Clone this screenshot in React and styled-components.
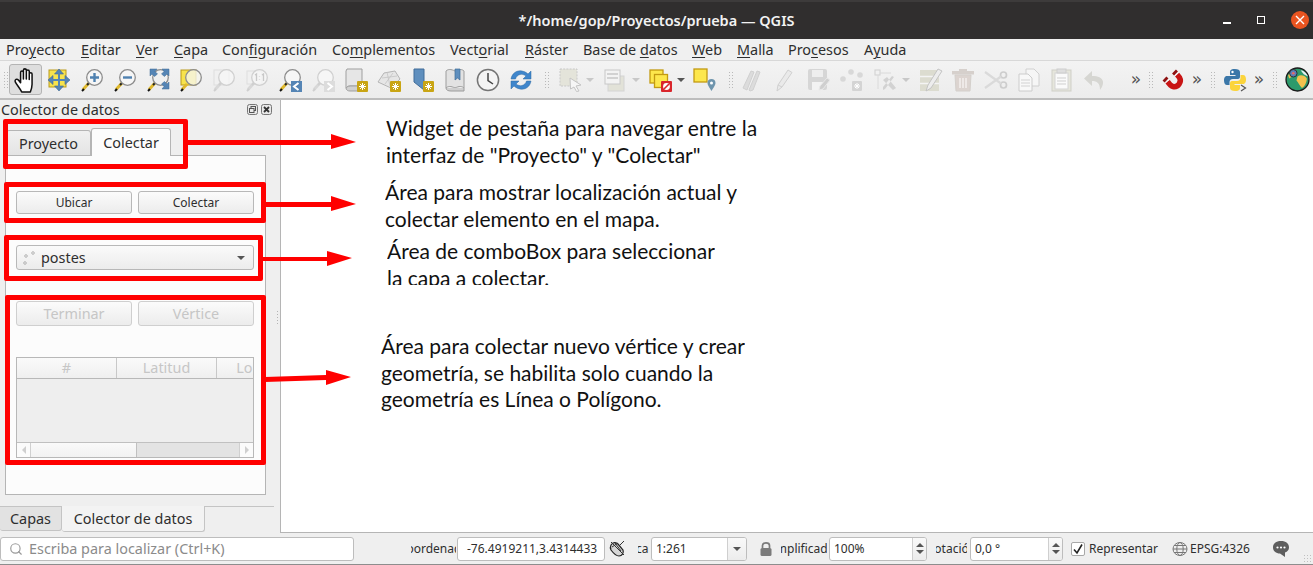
import React from "react";
import styled, { createGlobalStyle } from "styled-components";
import { Search } from "lucide-react";

const UI_FONT = `"Noto Sans", "Open Sans", sans-serif`;

const GlobalStyle = createGlobalStyle`
  html, body {
    margin: 0;
    padding: 0;
    background: #efefef;
  }
  * {
    box-sizing: border-box;
  }
`;

const Page = styled.div`
  position: relative;
  width: 1313px;
  height: 565px;
  overflow: hidden;
  display: flex;
  flex-direction: column;
  font-family: ${UI_FONT};
  font-size: 14.4px;
  color: #2e2e2e;
  background: #efefef;
`;

/* title bar */
const TitleBar = styled.div`
  height: 39px;
  flex: none;
  display: grid;
  grid-template-columns: 1fr auto 1fr;
  align-items: center;
  padding-bottom: 1px;
  background: #302e2e;
  border-top: 2px solid #3d3b3b;
`;
const Title = styled.div`
  grid-column: 2;
  color: #f2f2f2;
  font-size: 14.5px;
  font-weight: 600;
  white-space: nowrap;
`;
const WindowButtons = styled.div`
  grid-column: 3;
  display: flex;
  justify-content: flex-end;
  align-items: center;
  gap: 26px;
  padding-right: 4px;
`;
const MinButton = styled.div`
  width: 8px;
  height: 2px;
  margin-top: 5px;
  background: #fff;
`;
const MaxButton = styled.div`
  width: 8px;
  height: 8px;
  border: 1px solid #fff;
`;
const CloseButton = styled.div`
  width: 18px;
  height: 18px;
  border-radius: 50%;
  background: #e95420;
  display: flex;
  align-items: center;
  justify-content: center;
`;

/* menu */
const MenuBar = styled.div`
  height: 22px;
  flex: none;
  display: flex;
  align-items: center;
  gap: 14px;
  padding-left: 6px;
  background: #f0f0f0;
  border-bottom: 1px solid #d8d8d8;
`;
const MenuItem = styled.span`
  white-space: nowrap;
  color: #2e2e2e;
  width: ${(p) => p.$w}px;
  u {
    text-decoration-thickness: 1px;
    text-underline-offset: 2px;
  }
`;

/* toolbar */
const ToolBar = styled.div`
  height: 39px;
  flex: none;
  display: flex;
  align-items: center;
  padding-left: 3px;
  background: linear-gradient(#f3f3f3, #ececec);
  border-bottom: 2px solid #bdbdbd;
`;
const Handle = styled.div`
  flex: none;
  width: ${(p) => p.$w || 6}px;
  height: 17px;
  display: flex;
  justify-content: center;
  &::before {
    content: "";
    width: 6px;
    height: 100%;
    background-image: radial-gradient(#b9b9b9 0.8px, transparent 1px);
    background-size: 3px 3px;
  }
`;
const Tool = styled.div`
  flex: none;
  width: ${(p) => p.$w || 33}px;
  height: 31px;
  display: flex;
  align-items: center;
  justify-content: center;
  border-radius: 3px;
  border: 1px solid ${(p) => (p.$active ? "#b4b4b4" : "transparent")};
  background: ${(p) => (p.$active ? "#dedede" : "transparent")};
`;
const Drop = styled.div`
  flex: none;
  width: 0;
  height: 0;
  margin: 0 ${(p) => p.$m || 0}px 0 0;
  border-left: 4px solid transparent;
  border-right: 4px solid transparent;
  border-top: 4px solid ${(p) => (p.$on ? "#555" : "#c8c8c8")};
`;
const More = styled.div`
  flex: none;
  width: ${(p) => p.$w || 20}px;
  margin-left: ${(p) => p.$ml || 0}px;
  text-align: center;
  font-size: 17px;
  line-height: 1;
  color: #555;
  font-family: "DejaVu Sans", sans-serif;
`;

/* main area */
const Main = styled.div`
  flex: 1;
  min-height: 0;
  display: flex;
`;
const Dock = styled.div`
  position: relative;
  width: 280px;
  flex: none;
  display: flex;
  flex-direction: column;
`;
const Canvas = styled.div`
  flex: 1;
  position: relative;
  background: #fff;
  border-left: 1px solid #b5b5b5;
  border-bottom: 1px solid #b5b5b5;
`;
const DockHead = styled.div`
  height: 19px;
  flex: none;
  display: flex;
  align-items: center;
  justify-content: space-between;
  padding: 0 8px 0 1px;
`;
const DockIcons = styled.div`
  display: flex;
  gap: 3px;
`;
const Splitter = styled.div`
  position: absolute;
  right: 1px;
  top: 210px;
  width: 3px;
  height: 16px;
  background-image: radial-gradient(#b4b4b4 0.8px, transparent 1px);
  background-size: 3px 3px;
`;
const TabRow = styled.div`
  display: flex;
  align-items: flex-end;
  height: 36px;
  flex: none;
  padding-left: 6px;
`;
const Tab = styled.div`
  display: flex;
  align-items: center;
  justify-content: center;
  width: ${(p) => p.$w}px;
  height: ${(p) => (p.$active ? 28 : 26)}px;
  margin-bottom: -1px;
  position: relative;
  background: ${(p) => (p.$active ? "#fcfcfc" : "linear-gradient(#f0f0f0, #e4e4e4)")};
  border: 1px solid #b5b5b5;
  border-bottom: ${(p) => (p.$active ? "none" : "1px solid #b5b5b5")};
  border-left: ${(p) => (p.$active ? "1px solid #b5b5b5" : "1px solid #d0d0d0")};
  border-radius: 3px 3px 0 0;
`;
const Pane = styled.div`
  width: 261px;
  height: 340px;
  flex: none;
  margin-left: 5px;
  padding: 35px 10px 0;
  background: #fcfcfc;
  border: 1px solid #b5b5b5;
`;
const ButtonRow = styled.div`
  display: flex;
  gap: 6px;
  margin-bottom: ${(p) => p.$mb || 0}px;
`;
const PushButton = styled.div`
  width: 116px;
  height: ${(p) => p.$h || 23}px;
  display: flex;
  align-items: center;
  justify-content: center;
  border-radius: 3px;
  font-size: ${(p) => (p.$off ? 14.4 : 12)}px;
  color: ${(p) => (p.$off ? "#c6c6c6" : "#2e2e2e")};
  border: 1px solid ${(p) => (p.$off ? "#cfcfcf" : "#b8b8b8")};
  background: linear-gradient(#fbfbfb, #ececec);
`;
const Combo = styled.div`
  width: 238px;
  height: 25px;
  margin-bottom: 31px;
  display: flex;
  align-items: center;
  padding: 0 8px 0 4px;
  border-radius: 3px;
  border: 1px solid #b8b8b8;
  background: linear-gradient(#fafafa, #ececec);
`;
const ComboText = styled.span`
  flex: 1;
`;
const Table = styled.div`
  width: 238px;
  height: 101px;
  margin-top: 31px;
  display: flex;
  flex-direction: column;
  border: 1px solid #b8b8b8;
  overflow: hidden;
`;
const TableHead = styled.div`
  height: 21px;
  flex: none;
  display: flex;
  background: linear-gradient(#fafafa, #efefef);
  border-bottom: 1px solid #b8b8b8;
`;
const HeadCell = styled.div`
  flex: none;
  width: 100px;
  text-align: center;
  color: #c6c6c6;
  line-height: 20px;
  white-space: nowrap;
  border-right: 1px solid #c8c8c8;
`;
const TableBody = styled.div`
  flex: 1;
  background: #eeeeee;
`;
const ScrollBar = styled.div`
  height: 15px;
  flex: none;
  display: flex;
  background: #fbfbfb;
  border-top: 1px solid #c0c0c0;
`;
const ScrollEnd = styled.div`
  width: 14px;
  flex: none;
  display: flex;
  align-items: center;
  justify-content: center;
  border-left: ${(p) => (p.$end ? "1px solid #d0d0d0" : "none")};
  border-right: ${(p) => (p.$end ? "none" : "1px solid #d0d0d0")};
`;
const ScrollThumb = styled.div`
  width: 105px;
  flex: none;
  background: linear-gradient(#fafafa, #f2f2f2);
`;
const ScrollTrack = styled.div`
  flex: 1;
  background: #e3e3e3;
  border-left: 1px solid #c0c0c0;
`;
const Triangle = styled.div`
  width: 0;
  height: 0;
  border-top: 4px solid transparent;
  border-bottom: 4px solid transparent;
  border-${(p) => (p.$end ? "left" : "right")}: 4px solid #cfcfcf;
`;
const BottomTabs = styled.div`
  margin-top: 11px;
  height: 28px;
  flex: none;
  display: flex;
  align-items: flex-start;
  margin-right: 6px;
  border-top: 1px solid #c4c4c4;
`;
const BottomTab = styled.div`
  width: ${(p) => p.$w}px;
  height: ${(p) => (p.$active ? 26 : 25)}px;
  margin-top: -1px;
  display: flex;
  align-items: center;
  justify-content: center;
  background: ${(p) => (p.$active ? "#f3f3f3" : "#e2e2e2")};
  border: 1px solid #c4c4c4;
  border-top: ${(p) => (p.$active ? "none" : "1px solid #c4c4c4")};
  border-left: none;
  border-radius: 0 0 3px 3px;
`;

/* status bar */
const StatusBar = styled.div`
  height: 32px;
  flex: none;
  display: flex;
  align-items: center;
  background: #efefef;
  border-bottom: 1px solid #8d8d8d;
  font-size: 12px;
`;
const LocatorBox = styled.div`
  width: 354px;
  height: 24px;
  flex: none;
  display: flex;
  align-items: center;
  gap: 6px;
  padding-left: 8px;
  margin-right: 57px;
  font-size: 14.4px;
  color: #8b8b8b;
  background: #fff;
  border: 1px solid #bdbdbd;
  border-radius: 3px;
`;
const ClipLabel = styled.div`
  flex: none;
  width: ${(p) => p.$w}px;
  margin: 0 ${(p) => p.$mr || 0}px 0 ${(p) => p.$ml || 0}px;
  display: flex;
  justify-content: center;
  overflow: hidden;
  white-space: nowrap;
`;
const ClipText = styled.span`
  flex: none;
  margin-right: ${(p) => p.$shift || 0}px;
`;
const Field = styled.div`
  flex: none;
  width: ${(p) => p.$w}px;
  height: 24px;
  display: flex;
  align-items: center;
  background: #fff;
  border: 1px solid #bdbdbd;
  border-radius: 3px;
  overflow: hidden;
  padding-left: ${(p) => p.$pl || 4}px;
`;
const FieldText = styled.span`
  flex: 1;
  white-space: nowrap;
`;
const DropSide = styled.div`
  width: 19px;
  height: 100%;
  flex: none;
  display: flex;
  align-items: center;
  justify-content: center;
  border-left: 1px solid #cfcfcf;
  background: linear-gradient(#f9f9f9, #ececec);
`;
const SpinSide = styled.div`
  width: 14px;
  height: 100%;
  flex: none;
  display: flex;
  flex-direction: column;
  align-items: center;
  justify-content: center;
  gap: 3px;
  border-left: 1px solid #cfcfcf;
  background: linear-gradient(#f9f9f9, #ececec);
`;
const ArrowUp = styled.div`
  width: 0;
  height: 0;
  border-left: 4px solid transparent;
  border-right: 4px solid transparent;
  border-bottom: 4px solid #555;
`;
const ArrowDown = styled.div`
  width: 0;
  height: 0;
  border-left: 4px solid transparent;
  border-right: 4px solid transparent;
  border-top: 4px solid #555;
`;
const StatusIcon = styled.div`
  flex: none;
  width: ${(p) => p.$w}px;
  margin: 0 ${(p) => p.$mr || 0}px 0 ${(p) => p.$ml || 0}px;
  display: flex;
  justify-content: center;
`;
const Check = styled.div`
  width: 14px;
  height: 14px;
  flex: none;
  margin: 0 4px 0 8px;
  display: flex;
  align-items: center;
  justify-content: center;
  background: #fff;
  border: 1px solid #a8a8a8;
  border-radius: 2px;
`;
const StatusText = styled.span`
  flex: none;
  white-space: nowrap;
  width: ${(p) => p.$w}px;
`;
const Grip = styled.div`
  position: absolute;
  right: 1px;
  bottom: 2px;
  width: 9px;
  height: 9px;
  background-image: radial-gradient(#c0c0c0 0.8px, transparent 1px);
  background-size: 3px 3px;
`;

/* annotations drawn on top of the screenshot */
const Mark = styled.div`
  position: absolute;
  left: ${(p) => p.$x}px;
  top: ${(p) => p.$y}px;
  width: ${(p) => p.$w}px;
  height: ${(p) => p.$h}px;
  border: 5px solid #ff0000;
  border-radius: 2px;
`;
const Arrow = styled.svg`
  position: absolute;
  left: 0;
  top: 0;
  pointer-events: none;
`;
const Note = styled.div`
  position: absolute;
  left: ${(p) => p.$x}px;
  top: ${(p) => p.$y}px;
  height: ${(p) => p.$h || "auto"};
  overflow: hidden;
  font-family: Lato, "Open Sans", sans-serif;
  font-size: 21px;
  line-height: 26.5px;
  color: #111;
  white-space: nowrap;
`;

/* icons */
const Svg = ({ children, s = 24, v = 24 }) => (
  <svg width={s} height={s} viewBox={`0 0 ${v} ${v}`} fill="none">
    {children}
  </svg>
);

const Lens = ({ off, fill, children }) => (
  <>
    <line x1="9" y1="15" x2="3" y2="21.5" stroke={off ? "#d8d8d8" : "#e0b92d"} strokeWidth="3" />
    <line x1="2" y1="23" x2="4" y2="21" stroke={off ? "#cfcfcf" : "#111"} strokeWidth="2" />
    <line x1="9" y1="15" x2="7" y2="17" stroke={off ? "#cfcfcf" : "#222"} strokeWidth="2" />
    <circle cx="14.5" cy="9.5" r="7.8" fill={fill || "#f6f6f6"} stroke={off ? "#d0d0d0" : "#8d8d8d"} strokeWidth="1.3" />
    {children}
  </>
);

const HandIcon = () => (
  <Svg s={26}>
    <path
      d="M8 23C6 19 3 16 2 13.5C1.5 11.5 3.5 10.5 5 12L7 14.5V5C7 3.3 9.6 3.3 9.6 5V11V3C9.6 1.3 12.3 1.3 12.3 3V11V4C12.3 2.3 15 2.3 15 4V11.5V6.5C15 4.8 17.6 4.8 17.6 6.5V16C17.6 19 17 20.5 16 23Z"
      fill="#fff"
      stroke="#111"
      strokeWidth="1.4"
      strokeLinejoin="round"
    />
  </Svg>
);
const PanSelIcon = () => (
  <Svg>
    <rect x="2" y="2" width="17" height="17" fill="#f7e34d" stroke="#b99a1c" />
    <path d="M12 1L16.5 6H7.5ZM12 23L16.5 18H7.5ZM1 12L6 7.5V16.5ZM23 12L18 7.5V16.5Z" fill="#5585b5" stroke="#3f6a94" strokeWidth=".6" />
    <path d="M11 5H13V19H11ZM5 11H19V13H5Z" fill="#5585b5" />
  </Svg>
);
const ZoomInIcon = () => (
  <Svg>
    <Lens>
      <path d="M14.5 5V14M10 9.5H19" stroke="#4f81b0" strokeWidth="2.4" />
    </Lens>
  </Svg>
);
const ZoomOutIcon = () => (
  <Svg>
    <Lens>
      <path d="M10 9.5H19" stroke="#4f81b0" strokeWidth="2.4" />
    </Lens>
  </Svg>
);
const ZoomFullIcon = () => (
  <Svg>
    <Lens fill="#f0f0f0" />
    <path d="M4 1H11L9 3.5L11.5 6L8.5 8.5L6 6L4 8ZM23 1H16L18 3.5L15.5 6L18.5 8.5L21 6L23 8ZM23 21H16L18 18.5L15.5 16L18.5 13.5L21 16L23 14Z" fill="#5585b5" stroke="#3f6a94" strokeWidth=".5" />
  </Svg>
);
const ZoomLayerIcon = () => (
  <Svg>
    <rect x="2" y="2" width="15" height="15" fill="#f7e34d" stroke="#b99a1c" />
    <line x1="8" y1="16" x2="3" y2="21.5" stroke="#e0b92d" strokeWidth="3" />
    <line x1="2" y1="23" x2="4" y2="21" stroke="#111" strokeWidth="2" />
    <circle cx="14.5" cy="9.5" r="7.8" fill="rgba(245,245,235,.8)" stroke="#8d8d8d" strokeWidth="1.3" />
  </Svg>
);
const ZoomOffIcon = () => (
  <Svg>
    <rect x="2" y="2" width="15" height="15" fill="#f0f0f0" stroke="#dedede" />
    <Lens off fill="rgba(247,247,247,.7)" />
  </Svg>
);
const Zoom11Icon = () => (
  <Svg>
    <rect x="2" y="3" width="15" height="13" fill="#f0f0f0" stroke="#dedede" />
    <Lens off fill="rgba(247,247,247,.7)">
      <path d="M10 7L11.5 6V13M14.5 8V8.6M14.5 11V11.6M17 7L18.5 6V13" stroke="#c8c8c8" strokeWidth="1.3" />
    </Lens>
  </Svg>
);
const ZoomLastIcon = () => (
  <Svg>
    <Lens />
    <rect x="13" y="13" width="11" height="11" fill="#5585b5" />
    <path d="M20.5 15L16 18.5L20.5 22" stroke="#fff" strokeWidth="2" />
  </Svg>
);
const ZoomNextIcon = () => (
  <Svg>
    <Lens off />
    <rect x="13" y="13" width="11" height="11" fill="#dcdcdc" />
    <path d="M16.5 15L21 18.5L16.5 22" stroke="#fff" strokeWidth="2" />
  </Svg>
);
const Badge = () => (
  <>
    <rect x="13" y="13" width="11" height="11" fill="#c9a514" rx="1" />
    <path d="M18.5 15V22M15 18.5H22M16 16L21 21M21 16L16 21" stroke="#fff" strokeWidth="1" />
  </>
);
const MapIcon = () => (
  <Svg>
    <path d="M3 1H18V18H6C3.5 18 2 20 2 20V3Z" fill="#e6e6e6" stroke="#9f9f9f" />
    <path d="M2 20C2 22 4 23 6 23H15V18H6C3.5 18 2 20 2 20Z" fill="#d0d0d0" stroke="#9f9f9f" />
    <Badge />
  </Svg>
);
const Map3dIcon = () => (
  <Svg>
    <path d="M7 5L18 3L23 11L14 20L1 14Z" fill="#e6e6e6" stroke="#b5b5b5" />
    <path d="M5 10L20 8M8 16L16 5M13 18L10 4" stroke="#c4c4c4" strokeWidth=".8" />
    <Badge />
  </Svg>
);
const BookmarkNewIcon = () => (
  <Svg>
    <path d="M4 1H14V22L9 18L4 14Z" fill="#5f8fbe" stroke="#416d99" />
    <Badge />
  </Svg>
);
const BookmarksIcon = () => (
  <Svg>
    <path d="M3 3C5 1 8 1 12 3C16 1 19 1 21 3V20C19 18 16 18 12 20C8 18 5 18 3 20Z" fill="#e2e2e2" stroke="#9c9c9c" />
    <path d="M3 20C3 22 5 23 8 23H21V20" stroke="#9c9c9c" fill="#cfcfcf" />
    <path d="M12 1H17V12L14.5 10L12 12Z" fill="#5f8fbe" stroke="#416d99" strokeWidth=".7" />
  </Svg>
);
const ClockIcon = () => (
  <Svg>
    <circle cx="12" cy="12" r="10.6" fill="#f4f4f4" stroke="#757575" strokeWidth="1.5" />
    <path d="M12 5V12.5L17 16" stroke="#444" strokeWidth="1.5" />
  </Svg>
);
const RefreshIcon = () => (
  <Svg>
    <path d="M2 11C3 5 8 2 13 3C16 3.6 18 5 19 6L22 3V11H14L17 8C15 6.5 13 6 11 6.5C8.5 7 7 9 6.5 11Z" fill="#3f86cc" stroke="#2f6aa3" strokeWidth=".5" />
    <path d="M22 13C21 19 16 22 11 21C8 20.4 6 19 5 18L2 21V13H10L7 16C9 17.5 11 18 13 17.5C15.5 17 17 15 17.5 13Z" fill="#3f86cc" stroke="#2f6aa3" strokeWidth=".5" />
  </Svg>
);
const SelectIcon = () => (
  <Svg>
    <rect x="1" y="1" width="17" height="17" fill="#e4e4da" stroke="#c8c8c8" strokeDasharray="2 1.2" />
    <path d="M11 10L22 17L17 18L20 23L17.5 23.5L15 19L11.5 21Z" fill="#f6f6f6" stroke="#c4c4c4" />
  </Svg>
);
const FormIcon = () => (
  <Svg>
    <rect x="4" y="8" width="16" height="15" fill="#e2e2d8" stroke="#d4d4d4" />
    <rect x="1" y="2" width="15" height="14" fill="#f3f3f3" stroke="#c8c8c8" />
    <path d="M3 6H14M3 10H14" stroke="#c8c8c8" strokeWidth="1.5" />
  </Svg>
);
const LayersIcon = () => (
  <Svg>
    <rect x="1" y="2" width="13" height="13" fill="#fde74c" stroke="#c39a12" strokeWidth="1.3" />
    <rect x="5.5" y="6.5" width="13" height="13" fill="#fde74c" stroke="#c39a12" strokeWidth="1.3" />
    <rect x="12" y="13" width="11" height="11" rx="1" fill="#d9262c" />
    <circle cx="17.5" cy="18.5" r="3.4" fill="#fff" />
    <line x1="15" y1="21" x2="20" y2="16" stroke="#d9262c" strokeWidth="1.6" />
  </Svg>
);
const PinIcon = () => (
  <Svg>
    <rect x="1" y="1" width="13" height="13" fill="#fde74c" stroke="#c39a12" strokeWidth="1.3" />
    <path d="M18.5 11C21 11 22.5 12.5 22.5 15C22.5 17.5 19.5 21 18.5 23C17.5 21 14.5 17.5 14.5 15C14.5 12.5 16 11 18.5 11Z" fill="#6f95ad" />
    <circle cx="18.5" cy="15" r="1.5" fill="#fff" />
  </Svg>
);
const PencilsIcon = () => (
  <Svg>
    <path d="M2 20L10 3L13 4L6 22ZM8 22L16 3L19 4L12 22L9 23Z" fill="#dcdcdc" stroke="#d0d0d0" />
  </Svg>
);
const PencilIcon = () => (
  <Svg>
    <path d="M4 23L5 17L15 2L19 4.5L9 19Z" fill="#eaeaea" stroke="#d0d0d0" />
    <path d="M5 17L9 19" stroke="#d0d0d0" />
  </Svg>
);
const SaveIcon = () => (
  <Svg>
    <rect x="2" y="1" width="19" height="21" rx="2" fill="#d6d6d6" />
    <rect x="6" y="2" width="11" height="7" fill="#eeeeee" />
    <rect x="6" y="14" width="11" height="8" fill="#f2f2f2" />
    <path d="M13 22L14 18L21 10L24 12L17 21Z" fill="#cfcfcf" stroke="#e8e8e8" />
  </Svg>
);
const NodesIcon = () => (
  <Svg>
    <circle cx="3" cy="11" r="2.8" fill="#d8d8d8" />
    <circle cx="11" cy="4" r="2.8" fill="#d8d8d8" />
    <circle cx="20" cy="7" r="2.8" fill="#d8d8d8" />
    <rect x="12" y="13" width="10" height="10" rx="1" fill="#d4d4d4" />
    <path d="M17 15V21M14 18H20M15 16L19 20M19 16L15 20" stroke="#fff" />
  </Svg>
);
const VertexToolIcon = () => (
  <Svg>
    <rect x="1" y="2" width="5" height="5" stroke="#d0d0d0" />
    <path d="M6 5H17M4 7V21" stroke="#dadada" />
    <path d="M9 12L19 22L22 20L13 9ZM20 9L11 21L9 22L9 19L18 8Z" fill="#d2d2d2" />
  </Svg>
);
const AttrIcon = () => (
  <Svg>
    <rect x="1" y="2" width="19" height="21" fill="#dcdcd0" />
    <path d="M1 8.5H20M1 15.5H20" stroke="#f4f4f4" strokeWidth="1.5" />
    <path d="M7 23L9 17L19 1L23 3L12 20Z" fill="#ededed" stroke="#c4c4c4" />
  </Svg>
);
const TrashIcon = () => (
  <Svg>
    <path d="M4 7H20L19 23H5Z" fill="#dcd4d0" stroke="#d4d0cc" />
    <rect x="1" y="3" width="22" height="3.5" fill="#d6d0cc" />
    <rect x="8" y="1" width="8" height="2" fill="#d6d0cc" />
    <path d="M9 10V20M12 10V20M15 10V20" stroke="#f4f0ee" strokeWidth="1.5" />
  </Svg>
);
const ScissorsIcon = () => (
  <Svg>
    <circle cx="19.5" cy="7" r="3" stroke="#cdcdcd" strokeWidth="1.7" />
    <circle cx="19.5" cy="17" r="3" stroke="#cdcdcd" strokeWidth="1.7" />
    <path d="M1 4L17 15.5M1 20L17 8.5" stroke="#dadada" strokeWidth="2.2" />
  </Svg>
);
const CopyIcon = () => (
  <Svg>
    <path d="M9 1H17L22 6V18H9Z" fill="#f6f6f6" stroke="#d0d0d0" />
    <path d="M2 6H11L15 10V23H2Z" fill="#f8f8f8" stroke="#cccccc" />
    <path d="M4 12H13M4 15H13M4 18H13" stroke="#d2d2d2" />
  </Svg>
);
const PasteIcon = () => (
  <Svg>
    <rect x="2" y="2" width="19" height="21" fill="#e6e6dc" stroke="#cfcfc8" />
    <rect x="5" y="5" width="13" height="16" fill="#fafafa" stroke="#d4d4d4" />
    <rect x="7" y="1" width="9" height="4" fill="#dedede" stroke="#cdcdcd" />
    <path d="M7 10H16M7 13H16M7 16H16" stroke="#cfcfcf" />
  </Svg>
);
const UndoIcon = () => (
  <Svg>
    <path d="M9 3L1 10.5L9 18V13C14 13 17 15 17 22C22 16 22 8 9 8Z" fill="#d6d6d2" />
  </Svg>
);
const MagnetIcon = () => (
  <Svg>
    <path d="M16 6.5L18.5 9.5C21 14 17 19.5 12 18.5C10 18 8.5 16.5 6.5 13.5" stroke="#c81414" strokeWidth="5.5" />
    <path d="M15.5 6L16 6.5M6 13L6.5 13.5" stroke="#fff" strokeWidth="5.5" />
    <path d="M15 5.5L13 3.5M5.5 12.5L3.5 10.5" stroke="#8e1212" strokeWidth="5.5" />
  </Svg>
);
const PythonIcon = () => (
  <Svg>
    <path d="M12 1C7 1 7 3 7 5V7H12.5V8H4C1.5 8 1 10.5 1 12.5C1 15 2 17 4 17H6.5V14C6.5 12 8 11 10 11H15C16.5 11 17 10 17 8.5V4C17 2 15 1 12 1Z" fill="#3b77a8" />
    <path d="M12 23C17 23 17 21 17 19V17H11.5V16H20C22.5 16 23 13.5 23 11.5C23 9 22 7 20 7H17.5V10C17.5 12 16 13 14 13H9C7.5 13 7 14 7 15.5V20C7 22 9 23 12 23Z" fill="#fbd43c" />
    <circle cx="9.5" cy="4" r="1.2" fill="#fff" />
    <path d="M18 17L22.5 20L18 23" stroke="#555" strokeWidth="1.2" />
  </Svg>
);
const GlobeIcon = () => (
  <Svg s={25}>
    <circle cx="12" cy="12" r="11" fill="#2d9a6b" stroke="#1b1b1b" strokeWidth="1.3" />
    <path d="M3 8C6 4 9 3 11 3L9 8L4 11ZM12 9C15 7 19 8 21 11C21 15 18 20 16 20C14 18 13 15 11 13Z" fill="#f2c14e" />
    <path d="M15 3C18 3 21 6 22 9L18 7Z" fill="#e9f0f4" />
    <circle cx="8" cy="6" r="3.6" fill="#5d7fb8" stroke="#222" strokeWidth=".8" />
    <circle cx="8" cy="6" r="1.3" fill="#e56a6a" />
  </Svg>
);
const DockFloat = () => (
  <Svg s={11} v={11}>
    <rect x=".5" y=".5" width="10" height="10" rx="2" fill="#e8e8e8" stroke="#777" />
    <rect x="4" y="2.5" width="4.5" height="4" stroke="#555" />
    <rect x="2.5" y="4.5" width="4.5" height="4" fill="#e8e8e8" stroke="#555" />
  </Svg>
);
const DockClose = () => (
  <Svg s={11} v={11}>
    <rect x=".5" y=".5" width="10" height="10" rx="2" fill="#e8e8e8" stroke="#777" />
    <path d="M3 3L8 8M8 3L3 8" stroke="#333" strokeWidth="1.8" />
  </Svg>
);
const PointSymbol = () => (
  <Svg s={20} v={20}>
    <circle cx="4" cy="15" r="1.3" stroke="#999" strokeWidth=".7" />
    <circle cx="5" cy="8" r="1.3" stroke="#999" strokeWidth=".7" />
    <circle cx="12" cy="5" r="1.3" stroke="#999" strokeWidth=".7" />
  </Svg>
);
const MouseIcon = () => (
  <Svg s={18} v={18}>
    <path d="M3 5C5 2 8 2 10 4L15 10C16 13 14 16 11 16C8 16 6 14 3 10C2 8 2 7 3 5Z" fill="#d6d6d6" stroke="#222" strokeWidth="1.2" />
    <path d="M4 7L10 3M7 3L13 11M3 2L16 15M16 1L11 6" stroke="#333" strokeWidth="1" />
  </Svg>
);
const LockIcon = () => (
  <Svg s={16} v={16}>
    <path d="M4.5 7V4.5C4.5 1 11.5 1 11.5 4.5V7" stroke="#7b7b7b" strokeWidth="1.7" />
    <rect x="2.5" y="7" width="11" height="8" rx="1.5" fill="#7b7b7b" />
  </Svg>
);
const CrsIcon = () => (
  <Svg s={16} v={16}>
    <ellipse cx="8" cy="8" rx="7" ry="6.5" stroke="#777" />
    <ellipse cx="8" cy="8" rx="3.2" ry="6.5" stroke="#777" />
    <path d="M1 8H15M2 4.5H14M2 11.5H14" stroke="#777" />
  </Svg>
);
const CommentIcon = () => (
  <Svg s={18} v={18}>
    <path d="M9 1C4 1 1 3.5 1 7.5C1 11 4 13.5 8 13.5L13 17V12.5C15.5 11.5 17 10 17 7.5C17 3.5 14 1 9 1Z" fill="#5e5e5e" />
    <circle cx="5.5" cy="7.5" r="1.1" fill="#fff" />
    <circle cx="9" cy="7.5" r="1.1" fill="#fff" />
    <circle cx="12.5" cy="7.5" r="1.1" fill="#fff" />
  </Svg>
);

const MENU = [
  { pre: "Pro", key: "y", post: "ecto", w: 61 },
  { pre: "", key: "E", post: "ditar", w: 41 },
  { pre: "", key: "V", post: "er", w: 24 },
  { pre: "", key: "C", post: "apa", w: 34 },
  { pre: "Con", key: "f", post: "iguración", w: 96 },
  { pre: "Co", key: "m", post: "plementos", w: 104 },
  { pre: "Vect", key: "o", post: "rial", w: 61 },
  { pre: "", key: "R", post: "áster", w: 44 },
  { pre: "Base de ", key: "d", post: "atos", w: 95 },
  { pre: "", key: "W", post: "eb", w: 31 },
  { pre: "", key: "M", post: "alla", w: 37 },
  { pre: "Pro", key: "c", post: "esos", w: 62 },
  { pre: "A", key: "y", post: "uda", w: 43 },
];

const App = () => (
  <Page>
    <GlobalStyle />
    <TitleBar>
      <Title>*/home/gop/Proyectos/prueba — QGIS</Title>
      <WindowButtons>
        <MinButton />
        <MaxButton />
        <CloseButton>
          <Svg s={10} v={10}>
            <path d="M1 1L9 9M9 1L1 9" stroke="#fff" strokeWidth="1.4" />
          </Svg>
        </CloseButton>
      </WindowButtons>
    </TitleBar>

    <MenuBar>
      {MENU.map((m) => (
        <MenuItem key={m.pre + m.key + m.post} $w={m.w}>
          {m.pre}
          <u>{m.key}</u>
          {m.post}
        </MenuItem>
      ))}
    </MenuBar>

    <ToolBar>
      <Handle />
      <Tool $active><HandIcon /></Tool>
      <Tool><PanSelIcon /></Tool>
      <Tool><ZoomInIcon /></Tool>
      <Tool><ZoomOutIcon /></Tool>
      <Tool><ZoomFullIcon /></Tool>
      <Tool><ZoomLayerIcon /></Tool>
      <Tool><ZoomOffIcon /></Tool>
      <Tool><Zoom11Icon /></Tool>
      <Tool><ZoomLastIcon /></Tool>
      <Tool><ZoomNextIcon /></Tool>
      <Tool><MapIcon /></Tool>
      <Tool><Map3dIcon /></Tool>
      <Tool><BookmarkNewIcon /></Tool>
      <Tool><BookmarksIcon /></Tool>
      <Tool><ClockIcon /></Tool>
      <Tool><RefreshIcon /></Tool>
      <Handle $w={19} />
      <Tool $w={30}><SelectIcon /></Tool>
      <Drop $m={6} />
      <Tool $w={32}><FormIcon /></Tool>
      <Drop $m={4} />
      <Tool $w={33}><LayersIcon /></Tool>
      <Drop $on $m={1} />
      <Tool $w={38}><PinIcon /></Tool>
      <Handle $w={14} />
      <Tool $w={30}><PencilsIcon /></Tool>
      <Tool $w={33}><PencilIcon /></Tool>
      <Tool $w={33}><SaveIcon /></Tool>
      <Tool $w={35}><NodesIcon /></Tool>
      <Tool $w={33}><VertexToolIcon /></Tool>
      <Drop $m={5} />
      <Tool $w={31}><AttrIcon /></Tool>
      <Tool $w={33}><TrashIcon /></Tool>
      <Tool $w={33}><ScissorsIcon /></Tool>
      <Tool $w={33}><CopyIcon /></Tool>
      <Tool $w={33}><PasteIcon /></Tool>
      <Tool $w={33}><UndoIcon /></Tool>
      <More $ml={15} $w={20}>»</More>
      <Handle $w={10} />
      <Tool $w={34}><MagnetIcon /></Tool>
      <More $w={14}>»</More>
      <Handle $w={18} />
      <Tool $w={26}><PythonIcon /></Tool>
      <More $w={22}>»</More>
      <Handle $w={10} />
      <Tool $w={34}><GlobeIcon /></Tool>
    </ToolBar>

    <Main>
      <Dock>
        <DockHead>
          <span>Colector de datos</span>
          <DockIcons>
            <DockFloat />
            <DockClose />
          </DockIcons>
        </DockHead>
        <TabRow>
          <Tab $w={85}>Proyecto</Tab>
          <Tab $w={80} $active>Colectar</Tab>
        </TabRow>
        <Pane>
          <ButtonRow $mb={31}>
            <PushButton>Ubicar</PushButton>
            <PushButton>Colectar</PushButton>
          </ButtonRow>
          <Combo>
            <PointSymbol />
            <ComboText>postes</ComboText>
            <Drop $on />
          </Combo>
          <ButtonRow>
            <PushButton $off $h={25}>Terminar</PushButton>
            <PushButton $off $h={25}>Vértice</PushButton>
          </ButtonRow>
          <Table>
            <TableHead>
              <HeadCell>#</HeadCell>
              <HeadCell>Latitud</HeadCell>
              <HeadCell>Longitud</HeadCell>
            </TableHead>
            <TableBody />
            <ScrollBar>
              <ScrollEnd><Triangle /></ScrollEnd>
              <ScrollThumb />
              <ScrollTrack />
              <ScrollEnd $end><Triangle $end /></ScrollEnd>
            </ScrollBar>
          </Table>
        </Pane>
        <BottomTabs>
          <BottomTab $w={62}>Capas</BottomTab>
          <BottomTab $w={143} $active>Colector de datos</BottomTab>
        </BottomTabs>
        <Splitter />
      </Dock>
      <Canvas />
    </Main>

    <StatusBar>
      <LocatorBox>
        <Search size={14} color="#9a9a9a" />
        Escriba para localizar (Ctrl+K)
      </LocatorBox>
      <ClipLabel $w={45} $mr={1}>Coordenada</ClipLabel>
      <Field $w={148} $pl={9}><FieldText>-76.4919211,3.4314433</FieldText></Field>
      <StatusIcon $w={24}><MouseIcon /></StatusIcon>
      <ClipLabel $w={11} $ml={9} $mr={2}><ClipText $shift={5}>Escala</ClipText></ClipLabel>
      <Field $w={96}>
        <FieldText>1:261</FieldText>
        <DropSide><Drop $on /></DropSide>
      </Field>
      <StatusIcon $w={34} $ml={2} $mr={-2}><LockIcon /></StatusIcon>
      <ClipLabel $w={46} $mr={2}>Amplificador</ClipLabel>
      <Field $w={98}>
        <FieldText>100%</FieldText>
        <SpinSide><ArrowUp /><ArrowDown /></SpinSide>
      </Field>
      <ClipLabel $w={31} $ml={9} $mr={3}>Rotación</ClipLabel>
      <Field $w={93}>
        <FieldText>0,0 °</FieldText>
        <SpinSide><ArrowUp /><ArrowDown /></SpinSide>
      </Field>
      <Check>
        <Svg s={12} v={12}>
          <path d="M2 6.5L5 10L10 1.5" stroke="#222" strokeWidth="1.6" />
        </Svg>
      </Check>
      <StatusText $w={67}>Representar</StatusText>
      <StatusIcon $w={16} $ml={16} $mr={2}><CrsIcon /></StatusIcon>
      <StatusText $w={60}>EPSG:4326</StatusText>
      <StatusIcon $w={18} $ml={22}><CommentIcon /></StatusIcon>
    </StatusBar>
    <Grip />

    <Mark $x={3} $y={119} $w={185} $h={50} />
    <Mark $x={4} $y={182} $w={262} $h={41} />
    <Mark $x={4} $y={235} $w={259} $h={46} />
    <Mark $x={5} $y={295} $w={261} $h={170} />

    <Arrow width="1313" height="565">
      <g fill="#ff0000">
        <path d="M187 140H331V134L356 142L331 149V145H187Z" />
        <path d="M265 202H331V196L356 204L331 211V207H265Z" />
        <path d="M262 257H327V251L352 258L327 266V261H262Z" />
        <path d="M265 377L326 375V370L351 377L326 385V380L265 382Z" />
      </g>
    </Arrow>

    <Note $x={386} $y={115}>
      Widget de pestaña para navegar entre la<br />
      interfaz de "Proyecto" y "Colectar"
    </Note>
    <Note $x={385} $y={179}>
      Área para mostrar localización actual y<br />
      colectar elemento en el mapa.
    </Note>
    <Note $x={387} $y={238} $h="47px">
      Área de comboBox para seleccionar<br />
      la capa a colectar.
    </Note>
    <Note $x={381} $y={333}>
      Área para colectar nuevo vértice y crear<br />
      geometría, se habilita solo cuando la<br />
      geometría es Línea o Polígono.
    </Note>
  </Page>
);

export default App;
